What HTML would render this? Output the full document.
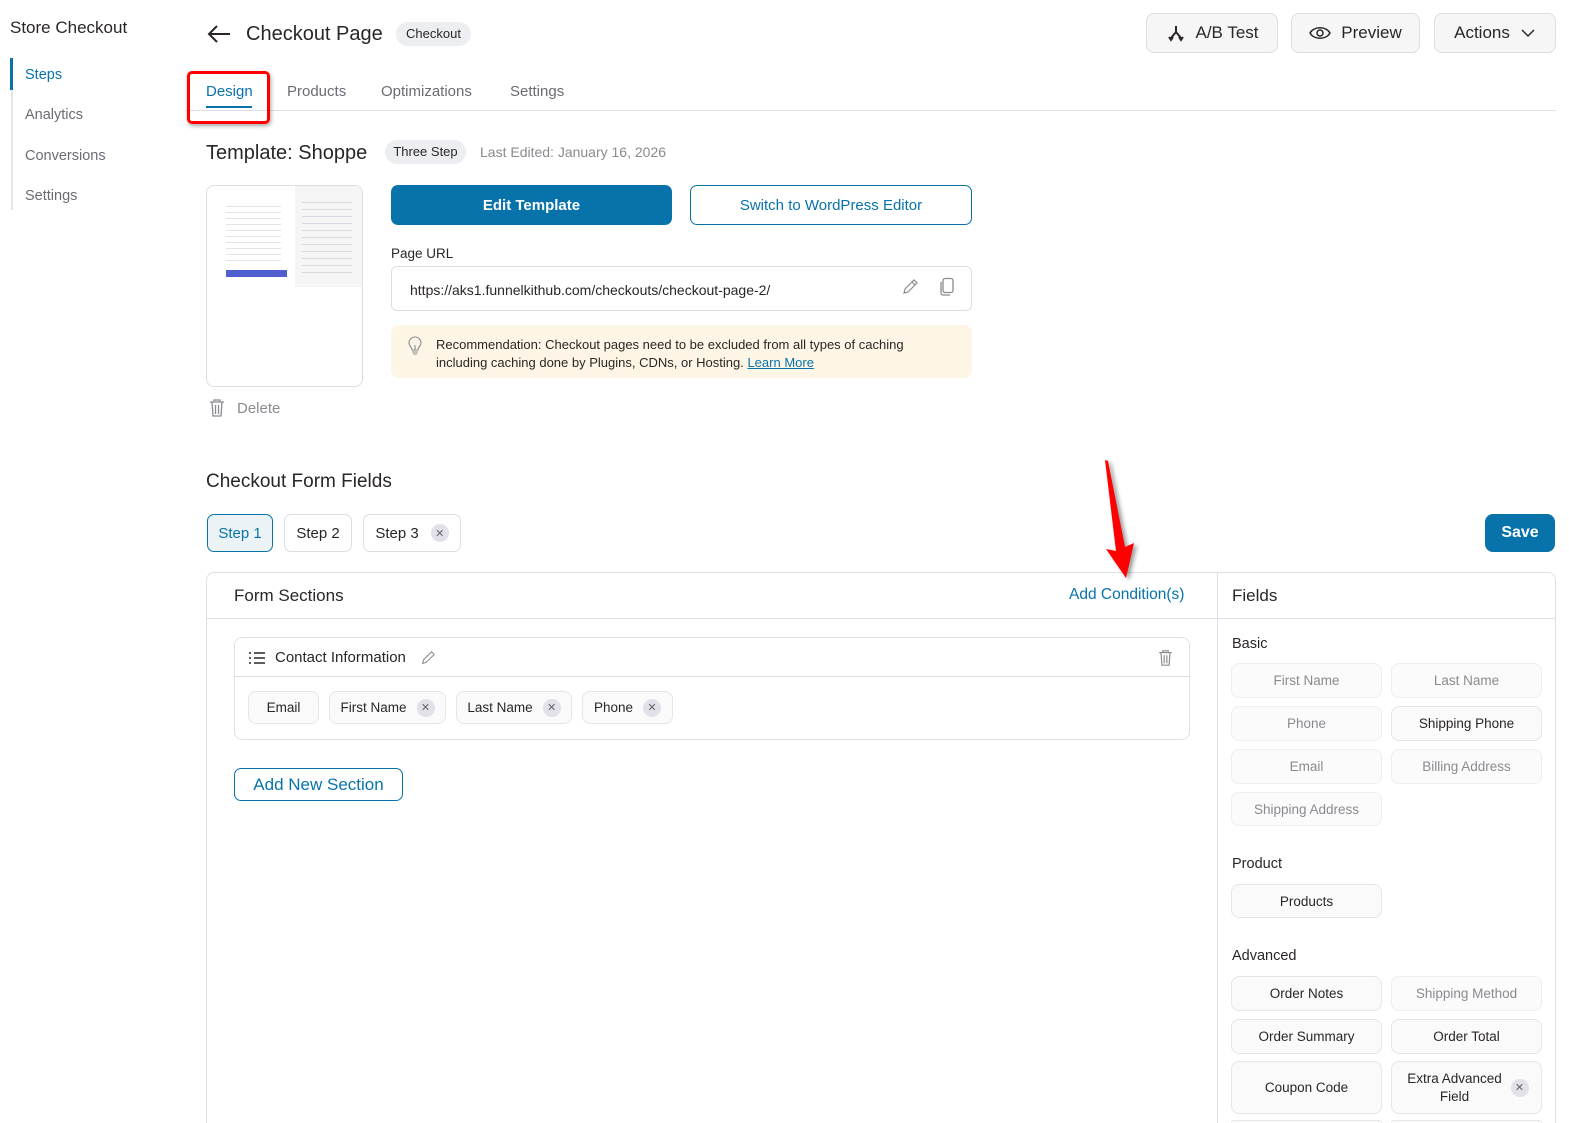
<!DOCTYPE html>
<html style="height:1123px;overflow:hidden"><head><meta charset="utf-8"><style>
*{box-sizing:border-box;margin:0;padding:0}
body{width:1569px;height:1123px;overflow:hidden;background:#fff;font-family:"Liberation Sans",sans-serif;color:#2a2626;position:relative}
.a{position:absolute;white-space:nowrap}
.btn{position:absolute;border:1px solid #dedde6;border-radius:8px;background:#f6f6f7;display:flex;align-items:center;justify-content:center;font-size:17px;color:#2a2626}
.chip{position:absolute;border:1px solid #e6e6ea;border-radius:8px;background:#fafafa;display:flex;align-items:center;justify-content:center;font-size:13.5px;color:#2a2626}
.chip.dim{color:#8a8a90;background:#fbfbfb;border-color:#eeeef1}
.x{display:inline-flex;width:18px;height:18px;border-radius:50%;background:#e2e1ea;align-items:center;justify-content:center;font-size:11px;color:#666;margin-left:10px}
.sb{position:absolute;left:25px;font-size:14.5px;color:#6b6b75}
</style></head><body>
<div class="a" style="left:10px;top:18px;font-size:17px">Store Checkout</div>
<div class="a" style="left:11px;top:58px;width:2px;height:152px;background:#e6e6ea"></div>
<div class="a" style="left:10px;top:58px;width:3px;height:32px;background:#0873ab"></div>
<div class="sb" style="top:67px;color:#0873ab">Steps</div>
<div class="sb" style="top:107px">Analytics</div>
<div class="sb" style="top:148px">Conversions</div>
<div class="sb" style="top:188px">Settings</div>
<svg class="a" style="left:206px;top:23px" width="26" height="22" viewBox="0 0 26 22"><path d="M24 11H3M11 3L3 11l8 8" fill="none" stroke="#2a2626" stroke-width="2"/></svg>
<div class="a" style="left:246px;top:23px;font-size:20px">Checkout Page</div>
<div class="a" style="left:396px;top:22px;width:75px;height:24px;border-radius:12px;background:#eceef1;font-size:13px;line-height:24px;text-align:center">Checkout</div>
<div class="btn" style="left:1146px;top:13px;width:132px;height:40px"><svg width="20" height="20" viewBox="0 0 20 20" style="margin-right:10px"><path d="M10 3v6M10 9l-5 6M10 9l5 6M3 14l2 3 2-3M13 14l2 3 2-3" fill="none" stroke="#2a2626" stroke-width="2"/></svg>A/B Test</div>
<div class="btn" style="left:1291px;top:13px;width:129px;height:40px"><svg width="22" height="16" viewBox="0 0 22 16" style="margin-right:10px"><path d="M1 8C5 1 17 1 21 8 17 15 5 15 1 8Z" fill="none" stroke="#2a2626" stroke-width="1.5"/><circle cx="11" cy="8" r="3" fill="none" stroke="#2a2626" stroke-width="1.5"/></svg>Preview</div>
<div class="btn" style="left:1434px;top:13px;width:122px;height:40px">Actions<svg width="16" height="10" viewBox="0 0 16 10" style="margin-left:10px"><path d="M2 2l6 6 6-6" fill="none" stroke="#2a2626" stroke-width="1.5"/></svg></div>
<div class="a" style="left:186px;top:110px;width:1370px;height:1px;background:#e0dfe8"></div>
<div class="a" style="left:206px;top:83px;font-size:15px;color:#0873ab">Design</div>
<div class="a" style="left:206px;top:106px;width:46px;height:2px;background:#0873ab"></div>
<div class="a" style="left:287px;top:83px;font-size:15px;color:#6b6b75">Products</div>
<div class="a" style="left:381px;top:83px;font-size:15px;color:#6b6b75">Optimizations</div>
<div class="a" style="left:510px;top:83px;font-size:15px;color:#6b6b75">Settings</div>
<div class="a" style="left:187px;top:71px;width:83px;height:53px;border:3px solid #f00;border-radius:5px;box-shadow:1px 2px 4px rgba(0,0,0,.35)"></div>
<div class="a" style="left:206px;top:142px;font-size:20px">Template: Shoppe</div>
<div class="a" style="left:385px;top:140px;width:81px;height:24px;border-radius:12px;background:#eceef1;font-size:13px;line-height:24px;text-align:center">Three Step</div>
<div class="a" style="left:480px;top:144px;font-size:14px;color:#8a8a90">Last Edited: January 16, 2026</div>
<div class="a" style="left:206px;top:185px;width:157px;height:202px;border:1px solid #dedde6;border-radius:8px;overflow:hidden">
 <div class="a" style="left:88px;top:0;width:69px;height:101px;background:#f5f5f6"></div>
 <div class="a" style="left:19px;top:84px;width:61px;height:7px;background:#4f5fd0"></div>
 <div class="a" style="left:19px;top:15px;width:55px;height:60px;background:repeating-linear-gradient(#fff 0 5px,#e4e4e8 5px 6px)"></div>
 <div class="a" style="left:95px;top:10px;width:50px;height:80px;background:repeating-linear-gradient(#f5f5f6 0 6px,#d8d8de 6px 7px)"></div>
</div>
<svg class="a" style="left:209px;top:398px" width="16" height="20" viewBox="0 0 16 20"><path d="M1 4h14M5 4V2h6v2M3 4l1 14h8l1-14M6.5 7v9M9.5 7v9" fill="none" stroke="#8a8a90" stroke-width="1.3"/></svg>
<div class="a" style="left:237px;top:400px;font-size:15px;color:#8a8a90">Delete</div>
<div class="a" style="left:391px;top:185px;width:281px;height:40px;background:#0873ab;border-radius:7px;color:#fff;font-size:15px;font-weight:bold;display:flex;align-items:center;justify-content:center">Edit Template</div>
<div class="a" style="left:690px;top:185px;width:282px;height:40px;border:1px solid #0873ab;border-radius:7px;color:#0873ab;font-size:15px;display:flex;align-items:center;justify-content:center">Switch to WordPress Editor</div>
<div class="a" style="left:391px;top:246px;font-size:13.5px">Page URL</div>
<div class="a" style="left:391px;top:266px;width:581px;height:45px;border:1px solid #dedde6;border-radius:6px"></div>
<div class="a" style="left:410px;top:282px;font-size:14px">https://aks1.funnelkithub.com/checkouts/checkout-page-2/</div>
<svg class="a" style="left:901px;top:278px" width="18" height="18" viewBox="0 0 18 18"><path d="M3 15l1-4 9-9 3 3-9 9-4 1zM11 4l3 3" fill="none" stroke="#8a8a90" stroke-width="1.2"/></svg>
<svg class="a" style="left:938px;top:277px" width="18" height="20" viewBox="0 0 18 20"><rect x="5" y="1.5" width="10" height="14" rx="2" fill="none" stroke="#8a8a90" stroke-width="1.3"/><path d="M3 5v11a2 2 0 0 0 2 2h7" fill="none" stroke="#8a8a90" stroke-width="1.3"/></svg>
<div class="a" style="left:391px;top:325px;width:581px;height:53px;background:#fdf5e5;border-radius:8px"></div>
<svg class="a" style="left:407px;top:336px" width="16" height="20" viewBox="0 0 16 20"><path d="M5 14c0-3-3-4-3-7a6 6 0 0 1 12 0c0 3-3 4-3 7zM5 16h6M6 18h4M8 14V9" fill="none" stroke="#8a8a90" stroke-width="1.1"/></svg>
<div class="a" style="left:436px;top:336px;font-size:13px;line-height:18px">Recommendation: Checkout pages need to be excluded from all types of caching<br>including caching done by Plugins, CDNs, or Hosting. <span style="color:#0873ab;text-decoration:underline">Learn More</span></div>
<div class="a" style="left:206px;top:471px;font-size:19px">Checkout Form Fields</div>
<div class="a" style="left:207px;top:514px;width:66px;height:38px;border:1px solid #0873ab;border-radius:7px;background:#ecf3f7;color:#0873ab;font-size:15px;display:flex;align-items:center;justify-content:center">Step 1</div>
<div class="a" style="left:284px;top:514px;width:68px;height:38px;border:1px solid #dedde6;border-radius:7px;font-size:15px;display:flex;align-items:center;justify-content:center">Step 2</div>
<div class="a" style="left:363px;top:514px;width:98px;height:38px;border:1px solid #dedde6;border-radius:7px;font-size:15px;display:flex;align-items:center;justify-content:center">Step 3<span class="x" style="margin-left:12px">✕</span></div>
<div class="a" style="left:1485px;top:514px;width:70px;height:38px;background:#0873ab;border-radius:8px;color:#fff;font-size:16px;font-weight:bold;display:flex;align-items:center;justify-content:center">Save</div>
<div class="a" style="left:206px;top:572px;width:1350px;height:570px;border:1px solid #e0dfe8;border-radius:8px"></div>
<div class="a" style="left:1217px;top:572px;width:1px;height:551px;background:#e0dfe8"></div>
<div class="a" style="left:207px;top:618px;width:1348px;height:1px;background:#e0dfe8"></div>
<div class="a" style="left:234px;top:586px;font-size:17px">Form Sections</div>
<div class="a" style="left:1069px;top:586px;font-size:15.5px;color:#0873ab">Add Condition(s)</div>
<div class="a" style="left:1232px;top:586px;font-size:17px">Fields</div>
<div class="a" style="left:234px;top:637px;width:956px;height:103px;border:1px solid #e0dfe8;border-radius:8px"></div>
<div class="a" style="left:235px;top:676px;width:954px;height:1px;background:#e0dfe8"></div>
<svg class="a" style="left:248px;top:650px" width="18" height="16" viewBox="0 0 18 16"><path d="M1 3h2M6 3h11M1 8h2M6 8h11M1 13h2M6 13h11" stroke="#2a2626" stroke-width="1.6"/></svg>
<div class="a" style="left:275px;top:649px;font-size:15px">Contact Information</div>
<svg class="a" style="left:420px;top:650px" width="16" height="16" viewBox="0 0 18 18"><path d="M3 15l1-4 9-9 3 3-9 9-4 1z" fill="none" stroke="#8a8a90" stroke-width="1.2"/></svg>
<svg class="a" style="left:1158px;top:649px" width="15" height="18" viewBox="0 0 16 20"><path d="M1 4h14M5 4V2h6v2M3 4l1 14h8l1-14M6.5 7v9M9.5 7v9" fill="none" stroke="#8a8a90" stroke-width="1.3"/></svg>
<div class="chip" style="left:248px;top:691px;width:71px;height:33px">Email</div>
<div class="chip" style="left:329px;top:691px;width:117px;height:33px">First Name<span class="x">✕</span></div>
<div class="chip" style="left:456px;top:691px;width:116px;height:33px">Last Name<span class="x">✕</span></div>
<div class="chip" style="left:582px;top:691px;width:91px;height:33px">Phone<span class="x">✕</span></div>
<div class="a" style="left:234px;top:768px;width:169px;height:33px;border:1px solid #0873ab;border-radius:7px;color:#0873ab;font-size:17px;display:flex;align-items:center;justify-content:center">Add New Section</div>
<div class="a" style="left:1232px;top:636px;font-size:14.5px">Basic</div>
<div class="chip dim" style="left:1231px;top:663px;width:151px;height:35px">First Name</div>
<div class="chip dim" style="left:1391px;top:663px;width:151px;height:35px">Last Name</div>
<div class="chip dim" style="left:1231px;top:706px;width:151px;height:35px">Phone</div>
<div class="chip" style="left:1391px;top:706px;width:151px;height:35px">Shipping Phone</div>
<div class="chip dim" style="left:1231px;top:749px;width:151px;height:35px">Email</div>
<div class="chip dim" style="left:1391px;top:749px;width:151px;height:35px">Billing Address</div>
<div class="chip dim" style="left:1231px;top:792px;width:151px;height:34px">Shipping Address</div>
<div class="a" style="left:1232px;top:856px;font-size:14.5px">Product</div>
<div class="chip" style="left:1231px;top:884px;width:151px;height:34px">Products</div>
<div class="a" style="left:1232px;top:948px;font-size:14.5px">Advanced</div>
<div class="chip" style="left:1231px;top:976px;width:151px;height:35px">Order Notes</div>
<div class="chip dim" style="left:1391px;top:976px;width:151px;height:35px">Shipping Method</div>
<div class="chip" style="left:1231px;top:1019px;width:151px;height:35px">Order Summary</div>
<div class="chip" style="left:1391px;top:1019px;width:151px;height:35px">Order Total</div>
<div class="chip" style="left:1231px;top:1061px;width:151px;height:53px">Coupon Code</div>
<div class="chip" style="left:1391px;top:1061px;width:151px;height:53px;line-height:18px"><span style="text-align:center;white-space:normal;width:100px">Extra Advanced Field</span><span class="x" style="margin-left:6px">✕</span></div>
<div class="chip" style="left:1231px;top:1120px;width:151px;height:3px;border-bottom:none;border-radius:8px 8px 0 0"></div>
<div class="chip" style="left:1391px;top:1120px;width:151px;height:3px;border-bottom:none;border-radius:8px 8px 0 0"></div>
<svg class="a" style="left:1095px;top:455px;filter:drop-shadow(3px 2px 2px rgba(0,0,0,.4))" width="50" height="130" viewBox="1095 455 50 130"><polygon points="1105,460 1108,461 1125,547 1134,543 1126,578 1106,549 1116,551" fill="#f00"/></svg>
</body></html>
